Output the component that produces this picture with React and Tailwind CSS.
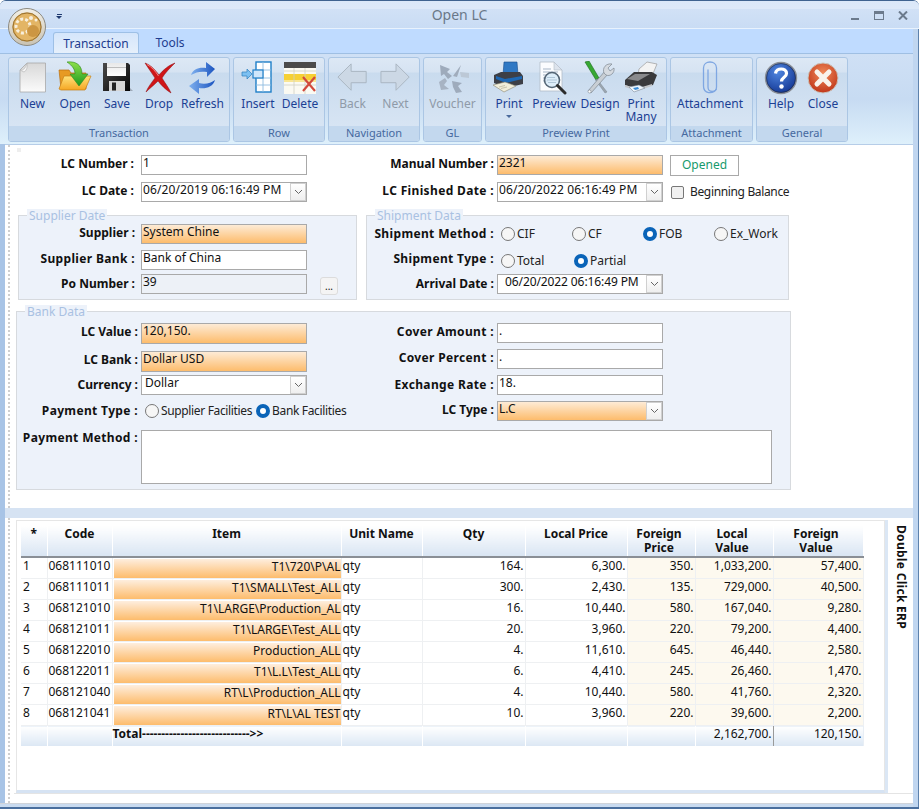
import React from "react";

const Ico = ({ children, w = 34, h = 34 }) => (
  <svg width={w} height={h} viewBox="0 0 34 34" className="block">{children}</svg>
);

const icons = {
  New: (
    <Ico>
      <defs>
        <linearGradient id="nw" x1="0" y1="0" x2="0" y2="1"><stop offset="0" stopColor="#d8d8d8" /><stop offset="1" stopColor="#fbfbfb" /></linearGradient>
      </defs>
      <path d="M4 9 L11 2 H29.500 V31 H4 Z" fill="url(#nw)" stroke="#a8a8a8" strokeWidth="0.8" />
      <path d="M4 9 Q9 10 11 2 Q12 9 8 11 Z" fill="#f5f5f5" stroke="#b0b0b0" strokeWidth="0.6" />
    </Ico>
  ),
  Open: (
    <Ico>
      <defs>
        <linearGradient id="of" x1="0" y1="0" x2="0" y2="1"><stop offset="0" stopColor="#ffe27a" /><stop offset="1" stopColor="#f5a623" /></linearGradient>
        <linearGradient id="oa" x1="0" y1="0" x2="0" y2="1"><stop offset="0" stopColor="#8fe04a" /><stop offset="1" stopColor="#1d9a20" /></linearGradient>
      </defs>
      <path d="M1 9 H11 L13 12 H28 V28 H3 Z" fill="#e79a23" stroke="#b96f10" strokeWidth="0.7" />
      <path d="M1 28 L6 15 H33 L27 29 H3 Z" fill="url(#of)" stroke="#c67f16" strokeWidth="0.7" />
      <path d="M9 1 C18 0 24 4 24 13 H30 L21 25 L12 13 H17 C17 9 15 5 9 1 Z" fill="url(#oa)" stroke="#2f8a22" strokeWidth="0.6" />
    </Ico>
  ),
  Save: (
    <Ico>
      <defs>
        <linearGradient id="sv" x1="0" y1="0" x2="1" y2="1"><stop offset="0" stopColor="#4a4a4a" /><stop offset="1" stopColor="#050505" /></linearGradient>
        <linearGradient id="sl" x1="0" y1="0" x2="0" y2="1"><stop offset="0" stopColor="#e8e8e8" /><stop offset="1" stopColor="#ffffff" /></linearGradient>
      </defs>
      <path d="M10 30 L33 30 L30 27 H10 Z" fill="#8a93a0" opacity="0.7" />
      <path d="M3 2 H28 L30 4 V30 H3 Z" fill="url(#sv)" />
      <rect x="7" y="2" width="19" height="13" fill="url(#sl)" />
      <rect x="7" y="6" width="19" height="1" fill="#bcbcbc" />
      <rect x="9" y="20" width="16" height="10" fill="#d6d6d6" />
      <rect x="12" y="21.500" width="4" height="8" fill="#222" />
    </Ico>
  ),
  Drop: (
    <Ico>
      <path d="M3 2 C9 4 14 10 17 14 C21 9 27 4 33 2 C28 7 23 12 20 17 C23 22 27 27 29 32 C24 29 19 24 16 20 C11 25 7 28 4 31 C6 26 10 21 13 17 C10 12 6 7 3 2 Z" fill="#cf1518" stroke="#8d0d10" strokeWidth="0.5" />
      <path d="M5 3.500 C10 6 14 11 16.500 15" stroke="#f6807f" strokeWidth="1" fill="none" />
    </Ico>
  ),
  Refresh: (
    <Ico>
      <defs>
        <linearGradient id="rf" x1="0" y1="0" x2="1" y2="0"><stop offset="0" stopColor="#7fb0ee" /><stop offset="1" stopColor="#1b54c0" /></linearGradient>
      </defs>
      <path d="M5 14 C7 8 13 6 20 7 L20 1 L29 8 L21 16 L21 11 C15 10 10 11 5 14 Z" fill="url(#rf)" />
      <path d="M29 19 C27 26 20 28 13 27 L13 33 L3 25 L13 18 L13 22 C19 24 25 22 29 19 Z" fill="url(#rf)" />
    </Ico>
  ),
  Insert: (
    <Ico>
      <rect x="15" y="1" width="15" height="30" fill="#fff" stroke="#1f7fc8" strokeWidth="1.4" />
      <path d="M15 9 H30 M15 17 H30 M15 24 H30 M22 1 V31" stroke="#8fbbe0" strokeWidth="0.9" />
      <rect x="12" y="9" width="10" height="8" fill="#cfe6fb" stroke="#1f7fc8" strokeWidth="1.2" />
      <path d="M1 11 H6 V8 L11 13 L6 18 V15 H1 Z" fill="#7cc0f2" stroke="#2f7fbd" strokeWidth="0.7" />
    </Ico>
  ),
  Delete: (
    <Ico>
      <rect x="1" y="1" width="32" height="32" fill="#fbfaf2" />
      <rect x="1" y="1" width="32" height="6" fill="#4b4b4b" />
      <rect x="1" y="13" width="32" height="6" fill="#f6d034" />
      <rect x="1" y="19" width="32" height="2" fill="#f9e693" />
      <path d="M1 10 H33 M1 24 H33 M11 7 V33 M22 7 V33" stroke="#d0cfc4" strokeWidth="0.8" />
      <path d="M20 16 L32 30 M32 16 L20 30" stroke="#d24a3c" strokeWidth="2.200" />
    </Ico>
  ),
  Back: (
    <Ico w={32} h={32}>
      <path d="M15 2 L1 16 L15 30 V22 H31 V10 H15 Z" fill="#ccd8e5" stroke="#a9b4c0" strokeWidth="1" />
    </Ico>
  ),
  Next: (
    <Ico w={32} h={32}>
      <path d="M17 2 L31 16 L17 30 V22 H1 V10 H17 Z" fill="#ccd8e5" stroke="#a9b4c0" strokeWidth="1" />
    </Ico>
  ),
  Voucher: (
    <Ico>
      <path d="M4 4 L14 8 L11 11 L16 15 L12 18 L8 13 L5 15 Z" fill="#9eabbc" />
      <path d="M3 21 L9 17 L11 20 L8 24 L13 28 L5 29 Z" fill="#a7b3c3" />
      <path d="M16 20 L26 22 L22 25 L26 31 L20 32 L17 26 Z" fill="#9eabbc" />
      <path d="M17 15 L25 4 L21 16 Z" fill="#a0acbc" />
      <path d="M24 11 L33 12 V17 L25 16 Z" fill="#bcc8d6" />
    </Ico>
  ),
  Print: (
    <Ico>
      <path d="M12 1 H25 L26 14 H11 Z" fill="#2f78c4" stroke="#174c8a" strokeWidth="0.6" />
      <path d="M2 14 L9 11 H28 L31 15 V23 L14 27 L2 22 Z" fill="#3d3f46" />
      <path d="M4 15 L13 18 L30 15 L30 18 L14 22 L4 18 Z" fill="#1e68b4" />
      <path d="M1 24 L13 21 L24 25 L12 31 Z" fill="#f1eeda" stroke="#8a8570" strokeWidth="0.6" />
      <path d="M7 26 L13 24.500 M9 27.500 L15 26" stroke="#b7b298" strokeWidth="0.7" />
    </Ico>
  ),
  Preview: (
    <Ico>
      <path d="M3 1 H17 L25 9 V30 H3 Z" fill="#fbfcfe" stroke="#b3bcc8" strokeWidth="0.8" />
      <path d="M17 1 V9 H25 Z" fill="#dde4ed" stroke="#b3bcc8" strokeWidth="0.6" />
      <path d="M6 8 H14 M6 11 H21 M6 14 H11 M6 17 H10 M6 20 H11" stroke="#a7b5c6" strokeWidth="1" />
      <circle cx="15" cy="19" r="7.500" fill="#d6e8f8" fillOpacity="0.8" stroke="#546575" strokeWidth="1.6" />
      <path d="M10 19 H20 M10 16.500 H18 M11 21.500 H19" stroke="#9cb4ca" strokeWidth="0.7" />
      <path d="M20.500 24.500 L28 32" stroke="#2c2c2c" strokeWidth="3" strokeLinecap="round" />
    </Ico>
  ),
  Design: (
    <Ico>
      <path d="M2 1 L6 0 L16 17 L13 19 Z" fill="#37a833" stroke="#1d6d1c" strokeWidth="0.6" />
      <path d="M14 18 L24 31 L22 32 L12.500 19 Z" fill="#9ba6b0" stroke="#6e7882" strokeWidth="0.4" />
      <path d="M5 30 L22 10 L25 13 L8 32 Z" fill="#c8ced4" stroke="#7d8791" strokeWidth="0.7" />
      <path d="M21 12 C19 7 23 2 29 3 L25 7 L27 10 L31 7 C32 12 27 16 23 14 Z" fill="#d5dae0" stroke="#7d8791" strokeWidth="0.7" />
      <circle cx="6.500" cy="30.500" r="1.500" fill="#fff" stroke="#7d8791" strokeWidth="0.6" />
    </Ico>
  ),
  "Print Many": (
    <Ico>
      <path d="M15 8 L23 1 L33 3 L28 15 L14 14 Z" fill="#f3f3f3" stroke="#9b9b9b" strokeWidth="0.7" />
      <path d="M1 19 L10 11 H28 L33 14 L29 24 L13 28 L1 24 Z" fill="#3a3a3c" />
      <path d="M3 18 L11 13 H26 L14 20 Z" fill="#8a8a8c" />
      <path d="M1 24 L13 27.500 L28 23 V25 L13 30 L1 26 Z" fill="#c4c6c9" />
      <path d="M5 26 L15 24 L21 27 L10 31 Z" fill="#eef5fb" stroke="#6e7a88" strokeWidth="0.5" />
      <path d="M9 27 L14 26 L15 28 L11 29 Z" fill="#3a8bd6" />
    </Ico>
  ),
  Attachment: (
    <Ico>
      <path d="M15 9 V26 C15 32 23.500 32 23.500 26 V7 C23.500 -1 10.500 -1 10.500 7 V25" fill="none" stroke="#7fa7e2" strokeWidth="1.300" strokeLinecap="round" />
      <path d="M10.500 25 C10.500 33 20 33.500 23.500 28" fill="none" stroke="#7fa7e2" strokeWidth="1.300" />
    </Ico>
  ),
  Help: (
    <Ico>
      <defs>
        <radialGradient id="hp" cx="0.400" cy="0.300" r="0.800"><stop offset="0" stopColor="#4f86e0" /><stop offset="1" stopColor="#0e2f8c" /></radialGradient>
      </defs>
      <circle cx="17" cy="17" r="15.500" fill="url(#hp)" stroke="#8b8f96" strokeWidth="1.400" />
      <circle cx="17" cy="17" r="14.500" fill="none" stroke="#222" strokeWidth="0.500" />
      <path d="M11.500 12.500 C12 6.500 22.500 6.500 22.500 12.500 C22.500 16.500 17.500 16 17.500 20.500" fill="none" stroke="#fff" strokeWidth="3.200" />
      <circle cx="17.500" cy="25.500" r="2.200" fill="#fff" />
    </Ico>
  ),
  Close: (
    <Ico>
      <defs>
        <radialGradient id="cl" cx="0.500" cy="0.350" r="0.750"><stop offset="0" stopColor="#f08a5a" /><stop offset="1" stopColor="#b92a10" /></radialGradient>
      </defs>
      <circle cx="17" cy="17" r="15" fill="url(#cl)" stroke="#c9c4bc" strokeWidth="1" />
      <path d="M11 11 L23 23 M23 11 L11 23" stroke="#f8f3ec" strokeWidth="5" strokeLinecap="round" />
    </Ico>
  ),
};

const RibbonBtn = ({ name, cls, off, label, arrow }) => (
  <div className={`flex flex-col items-center shrink-0 ${cls}`}>
    <div className="h-[36px] flex items-center justify-center mt-[2px]">{icons[name]}</div>
    <div className={`mt-[1px] text-center leading-[13px] whitespace-pre-line ${off ? "text-[#8f9aa8]" : "text-[#1c3f94]"}`}>{label || name}</div>
    {arrow && <div className="mt-[5px] w-0 h-0 border-x-[3px] border-x-transparent border-t-[3px] border-t-[#4a6a9c]" />}
  </div>
);

const Group = ({ w, caption, children, pl }) => (
  <div className={`${w} h-[85px] shrink-0 flex flex-col rounded-[3px] border border-[#abc6e4] overflow-hidden bg-[linear-gradient(#dde8f5_0%,#d6e3f2_17%,#c9dbee_18%,#dbe7f5_100%)]`}>
    <div className={`h-[68px] flex ${pl}`}>{children}</div>
    <div className="h-[15px] mt-auto bg-[#c3d8ee] text-center text-[11px] leading-[13px] text-[#46699f]">{caption}</div>
  </div>
);

const Label = ({ w, children, cls = "" }) => (
  <div className={`${w} shrink-0 flex justify-end font-bold text-[#111] whitespace-nowrap leading-[16px] ${cls}`}>{children}</div>
);

const Input = ({ value, w = "w-[166px]", h = "h-[20px]", orange, gray, pl = "pl-[1px]", dropdown, cls = "" }) => (
  <div className={`${w} ${h} shrink-0 flex border border-[#a9a9a9] ${pl} leading-[16px] text-[#111] whitespace-nowrap ${orange ? "bg-[linear-gradient(#fdebd6,#fdbc6c)]" : gray ? "bg-[#edf1f7]" : "bg-white"} ${cls}`}>
    <span className="flex-1 overflow-hidden">{value}</span>
    {dropdown && (
      <span className="w-[16px] shrink-0 border border-[#d0d0d0] bg-[linear-gradient(#ffffff,#efefef)] flex items-center justify-center">
        <svg width="9" height="6" viewBox="0 0 9 6"><path d="M1 1 L4.500 4.500 L8 1" fill="none" stroke="#666" strokeWidth="1" /></svg>
      </span>
    )}
  </div>
);

const Radio = ({ on, label, cls = "" }) => (
  <div className={`flex items-center text-[#222] whitespace-nowrap ${cls}`}>
    {on ? (
      <span className="w-[14px] h-[14px] shrink-0 rounded-full bg-white border-[4px] border-[#0a64b8]" />
    ) : (
      <span className="w-[14px] h-[14px] shrink-0 rounded-full bg-[#f6f6f6] border border-[#777]" />
    )}
    <span className="ml-[2px]">{label}</span>
  </div>
);

const Fieldset = ({ legend, cls, children, legendCls }) => (
  <div className={`relative border border-[#d7dade] bg-[#edf2fa] ${cls}`}>
    <div className={`absolute -top-[7px] px-[2px] h-[13px] leading-[13px] bg-[#edf2fa] text-[#a9c1e2] whitespace-nowrap ${legendCls}`}>{legend}</div>
    {children}
  </div>
);

const colW = ["w-[26px]", "w-[65px]", "w-[229px]", "w-[81px]", "w-[103px]", "w-[102px]", "w-[68px]", "w-[78px]", "w-[90px]"];
const heads = ["*", "Code", "Item", "Unit Name", "Qty", "Local Price", "Foreign\nPrice", "Local\nValue", "Foreign\nValue"];
const rows = [
  ["1", "068111010", "T1\\720\\P\\AL", "qty", "164.", "6,300.", "350.", "1,033,200.", "57,400."],
  ["2", "068111011", "T1\\SMALL\\Test_ALL", "qty", "300.", "2,430.", "135.", "729,000.", "40,500."],
  ["3", "068121010", "T1\\LARGE\\Production_AL", "qty", "16.", "10,440.", "580.", "167,040.", "9,280."],
  ["4", "068121011", "T1\\LARGE\\Test_ALL", "qty", "20.", "3,960.", "220.", "79,200.", "4,400."],
  ["5", "068122010", "Production_ALL", "qty", "4.", "11,610.", "645.", "46,440.", "2,580."],
  ["6", "068122011", "T1\\L.L\\Test_ALL", "qty", "6.", "4,410.", "245.", "26,460.", "1,470."],
  ["7", "068121040", "RT\\L\\Production_ALL", "qty", "4.", "10,440.", "580.", "41,760.", "2,320."],
  ["8", "068121041", "RT\\L\\AL TEST", "qty", "10.", "3,960.", "220.", "39,600.", "2,200."],
];

const Dotted = () => <div className="w-0 ml-[3px] mr-[4px] shrink-0 border-l-2 border-dotted border-[#cfcfcf]" />;
const wide = "tracking-[0.35px]";
const tight = "tracking-[-0.35px]";

export default function App() {
  return (
    <div className="w-[919px] h-[809px] overflow-hidden relative flex flex-col rounded-t-[6px] border-t border-[#3f6390] bg-[#c9dcf3] text-[12px] font-['Noto_Sans','Liberation_Sans',sans-serif] text-[#111]">
      {/* Title bar */}
      <div className="h-[28px] shrink-0 relative flex items-center justify-center border-b border-[#e8f2fd] bg-[linear-gradient(#dbe8f9_0%,#dde9f9_28%,#d1e1f6_30%,#c9dcf4_100%)]">
        <span className="text-[14px] text-[#6a7888]">Open LC</span>
        <div className="absolute left-[56px] top-[13px] w-[6px] flex flex-col items-center">
          <div className="w-[5px] h-[1px] bg-[#1f3a70]" />
          <div className="mt-[1px] w-0 h-0 border-x-[3px] border-x-transparent border-t-[3px] border-t-[#1f3a70]" />
        </div>
        <div className="absolute right-[11px] top-[10px] flex items-center gap-[14px]">
          <svg width="9" height="9" viewBox="0 0 9 9"><rect x="0" y="7" width="8" height="2" fill="#6b7a8c" /></svg>
          <svg width="10" height="9" viewBox="0 0 10 9"><rect x="0.500" y="0.500" width="9" height="8" fill="none" stroke="#6b7a8c" /><rect x="0" y="0" width="10" height="3" fill="#6b7a8c" /></svg>
          <svg width="10" height="9" viewBox="0 0 10 9"><path d="M1 0.500 L9 8.500 M9 0.500 L1 8.500" stroke="#6b7a8c" strokeWidth="2" /></svg>
        </div>
      </div>
      {/* App orb */}
      <div className="absolute left-[8px] top-[7px] w-[38px] h-[38px] rounded-full z-10 border border-[#8d8a80] bg-[linear-gradient(#f2efe6,#c9c3b4)] flex items-center justify-center">
        <svg width="30" height="30" viewBox="0 0 30 30">
          <circle cx="15" cy="15" r="14.500" fill="#b98a3a" />
          <circle cx="15" cy="15" r="14" fill="#e3b565" stroke="#8c6524" strokeWidth="0.8" />
          <circle cx="11" cy="14" r="7" fill="none" stroke="#f7efdd" strokeWidth="3" strokeDasharray="3 2" />
          <circle cx="21" cy="19" r="6" fill="#cc9642" />
          <circle cx="19" cy="6" r="2" fill="#f7efdd" />
          <circle cx="24" cy="8" r="1.500" fill="#f7efdd" />
        </svg>
      </div>
      {/* Tabs */}
      <div className="h-[24px] shrink-0 flex items-end bg-[#bfdbff] pl-[53px] text-[#1e3d8f]">
        <div className="w-[86px] h-[21px] rounded-t-[3px] border border-b-0 border-[#9ec0e6] bg-[linear-gradient(#d5e6fb,#e6f0fb)] text-center leading-[21px]">Transaction</div>
        <div className="w-[64px] h-[21px] ml-[-1px] text-center leading-[21px]">Tools</div>
      </div>
      {/* Ribbon */}
      <div className="h-[91px] shrink-0 flex gap-[3px] pl-[8px] pt-[3px] border-t border-[#9fbfe3] bg-[linear-gradient(#cfe0f5,#c7dbf2_50%,#def0fb_100%)]">
        <Group w="w-[222px]" caption="Transaction" pl="pl-[2px]">
          <RibbonBtn name="New" cls="w-[43px]" />
          <RibbonBtn name="Open" cls="w-[42px]" />
          <RibbonBtn name="Save" cls="w-[42px]" />
          <RibbonBtn name="Drop" cls="w-[42px]" />
          <RibbonBtn name="Refresh" cls="w-[45px]" />
        </Group>
        <Group w="w-[92px]" caption="Row" pl="pl-[3px]">
          <RibbonBtn name="Insert" cls="w-[42px]" />
          <RibbonBtn name="Delete" cls="w-[42px]" />
        </Group>
        <Group w="w-[92px]" caption="Navigation" pl="pl-[2px]">
          <RibbonBtn name="Back" off cls="w-[43px]" />
          <RibbonBtn name="Next" off cls="w-[43px]" />
        </Group>
        <Group w="w-[59px]" caption="GL" pl="pl-0">
          <RibbonBtn name="Voucher" off cls="w-[57px]" />
        </Group>
        <Group w="w-[182px]" caption="Preview Print" pl="pl-[2px]">
          <RibbonBtn name="Print" arrow cls="w-[42px]" />
          <RibbonBtn name="Preview" cls="w-[48px]" />
          <RibbonBtn name="Design" cls="w-[44px]" />
          <RibbonBtn name="Print Many" label={"Print\nMany"} cls="w-[38px]" />
        </Group>
        <Group w="w-[83px]" caption="Attachment" pl="pl-0">
          <RibbonBtn name="Attachment" cls="w-[78px]" />
        </Group>
        <Group w="w-[92px]" caption="General" pl="pl-[3px]">
          <RibbonBtn name="Help" cls="w-[42px]" />
          <RibbonBtn name="Close" cls="w-[42px]" />
        </Group>
      </div>

      {/* Body */}
      <div className="flex-1 min-h-0 flex flex-col mr-[5px] border-l-[5px] border-[#a8c4e6] bg-white">
        {/* Form */}
        <div className="h-[364px] shrink-0 flex border-t border-[#b6cde8]">
          <Dotted />
          <div className="relative flex-1 pt-[10px] [&_span.flex-1]:-mt-[1px]">
            <div className="absolute left-[3px] top-[3px] w-[4px] h-[4px] bg-[#eeeeee]" />
            <div className="flex items-center h-[20px]">
              <Label w="w-[120px]" cls="-mt-[2px]">LC Number :</Label>
              <Input value="1" cls="ml-[7px]" />
              <Label w="w-[187px]" cls="-mt-[2px]">Manual Number :</Label>
              <Input value="2321" orange cls="ml-[3px]" />
              <div className="ml-[7px] w-[69px] h-[21px] border border-[#a9a9a9] text-center leading-[18px] text-[#169a6c]">Opened</div>
            </div>
            <div className="flex items-center h-[20px] mt-[7px]">
              <Label w="w-[120px]" cls="-mt-[2px]">LC Date :</Label>
              <Input value="06/20/2019 06:16:49 PM" dropdown cls="ml-[7px] tracking-[0.12px]" />
              <Label w="w-[187px]" cls={`${wide} -mt-[2px]`}>LC Finished Date :</Label>
              <Input value="06/20/2022 06:16:49 PM" dropdown cls="ml-[3px] tracking-[0.12px]" />
              <div className="ml-[8px] w-[13px] h-[13px] rounded-[2px] border border-[#777] bg-[#f0f0f0]" />
              <span className={`ml-[6px] text-[#222] ${tight}`}>Beginning Balance</span>
            </div>
            <div className="flex mt-[13px]">
              <Fieldset legend="Supplier Date" cls="ml-[4px] w-[339px] h-[85px] pt-[8px]" legendCls="left-[8px]">
                <div className="flex items-center h-[20px]">
                  <Label w="w-[116px]" cls="-mt-[2px]">Supplier :</Label>
                  <Input value="System Chine" orange cls="ml-[6px]" />
                </div>
                <div className="flex items-center h-[20px] mt-[6px]">
                  <Label w="w-[116px]" cls={`${wide} -mt-[2px]`}>Supplier Bank :</Label>
                  <Input value="Bank of China" cls="ml-[6px]" />
                </div>
                <div className="flex items-center h-[20px] mt-[4px]">
                  <Label w="w-[116px]">Po Number :</Label>
                  <Input value="39" gray cls="ml-[6px]" />
                  <div className="ml-[13px] mt-[3px] w-[18px] h-[18px] rounded-[3px] border border-[#dcdcdc] bg-[#f4f4f4] text-center leading-[16px] text-[10px]">...</div>
                </div>
              </Fieldset>
              <Fieldset legend="Shipment Data" cls="ml-[9px] w-[423px] h-[85px] pt-[8px]" legendCls="left-[8px]">
                <div className="flex items-center h-[20px]">
                  <Label w="w-[127px]" cls={wide}>Shipment Method :</Label>
                  <Radio label="CIF" cls="ml-[7px] w-[71px]" />
                  <Radio label="CF" cls="w-[71px]" />
                  <Radio on label="FOB" cls="w-[71px]" />
                  <Radio label="Ex_Work" />
                </div>
                <div className="flex items-center h-[20px] mt-[6px]">
                  <Label w="w-[127px]" cls={`${wide} -mt-[2px]`}>Shipment Type :</Label>
                  <Radio label="Total" cls="ml-[7px] w-[73px] mt-[1px]" />
                  <Radio on label="Partial" cls="mt-[1px]" />
                </div>
                <div className="flex items-center h-[20px] mt-[4px]">
                  <Label w="w-[127px]">Arrival Date :</Label>
                  <Input value="06/20/2022 06:16:49 PM" pl="pl-[7px]" dropdown cls="ml-[3px] tracking-[-0.1px]" />
                </div>
              </Fieldset>
            </div>
            <Fieldset legend="Bank Data" cls="mt-[11px] ml-[2px] w-[775px] h-[179px] pt-[11px]" legendCls="left-[8px]">
              <div className="flex">
                <div className="w-[290px] shrink-0">
                  <div className="flex items-center h-[21px]">
                    <Label w="w-[121px]" cls="-mt-[4px]">LC Value :</Label>
                    <Input value="120,150." orange h="h-[21px]" cls="ml-[3px]" />
                  </div>
                  <div className="flex items-center h-[21px] mt-[7px]">
                    <Label w="w-[121px]" cls="-mt-[4px]">LC Bank :</Label>
                    <Input value="Dollar USD" orange h="h-[21px]" cls="ml-[3px]" />
                  </div>
                  <div className="flex items-center h-[20px] mt-[3px]">
                    <Label w="w-[121px]">Currency :</Label>
                    <Input value="Dollar" dropdown pl="pl-[3px]" cls="ml-[3px]" />
                  </div>
                  <div className="flex items-center h-[20px] mt-[6px]">
                    <Label w="w-[121px]" cls={wide}>Payment Type :</Label>
                    <Radio label="Supplier Facilities" cls={`ml-[7px] w-[118px] ${tight}`} />
                    <Radio on label="Bank Facilities" cls={`ml-[4px] ${tight}`} />
                  </div>
                </div>
                <div>
                  <div className="flex items-center h-[20px]">
                    <Label w="w-[187px]" cls={`${wide} -mt-[3px]`}>Cover Amount :</Label>
                    <Input value="." cls="ml-[3px]" />
                  </div>
                  <div className="flex items-center h-[20px] mt-[6px]">
                    <Label w="w-[187px]" cls={`${wide} -mt-[2px]`}>Cover Percent :</Label>
                    <Input value="." cls="ml-[3px]" />
                  </div>
                  <div className="flex items-center h-[20px] mt-[6px]">
                    <Label w="w-[187px]" cls={wide}>Exchange Rate :</Label>
                    <Input value="18." cls="ml-[3px]" />
                  </div>
                  <div className="flex items-center h-[20px] mt-[6px]">
                    <Label w="w-[187px]" cls="-mt-[2px]">LC Type :</Label>
                    <Input value="L.C" orange dropdown cls="ml-[3px]" />
                  </div>
                </div>
              </div>
              <div className="flex mt-[9px]">
                <Label w="w-[121px]" cls={wide}>Payment Method :</Label>
                <Input value="" w="w-[631px]" h="h-[54px]" cls="ml-[3px]" />
              </div>
            </Fieldset>
          </div>
        </div>
        {/* Splitter */}
        <div className="h-[10px] shrink-0 bg-[#d6e3f3]" />
        {/* Lower */}
        <div className="flex-1 min-h-0 flex">
          <Dotted />
          <div className="flex-1 min-w-0 flex flex-col">
            <div className="flex-1 min-h-0 flex pt-[2px]">
              <div className="w-[869px] ml-[2px] shrink-0 border border-[#e6e6e6] border-b-[3px] border-b-[#d6e3f3] pl-[4px] pt-[5px]">
                <table className="table-fixed border-collapse w-[842px]">
                  <colgroup>
                    {colW.map((c, i) => <col key={i} className={c} />)}
                  </colgroup>
                  <thead>
                    <tr className="h-[31px]">
                      {heads.map((h, i) => (
                        <th key={i} className={`p-0 align-top border-r border-white border-b-2 border-b-[#8a8f96] bg-[linear-gradient(#ffffff,#d9e5f3)] font-bold text-[#111] text-center leading-[14px] whitespace-pre-line pt-[1px] ${i === 0 ? "text-[#1e3d8f]" : ""} ${i >= 6 ? "pr-[4px]" : ""}`}>{h}</th>
                      ))}
                    </tr>
                  </thead>
                  <tbody>
                    {rows.map((r, ri) => (
                      <tr key={ri} className="h-[21px]">
                        {r.map((v, i) => (
                          <td key={i} className={`p-0 border-r border-b border-[#eef0f2] leading-[16px] whitespace-nowrap overflow-hidden align-top ${i >= 6 ? "bg-[#fdf9ef]" : ""} ${i === 2 || i >= 4 ? "text-right" : "text-left"} ${i === 0 ? "pl-[2px]" : i === 1 || i === 3 ? "pl-[1px]" : ""} ${i >= 4 ? "pr-[1px]" : ""}`}>
                            {i === 2 ? (
                              <div className="h-[19px] mt-[1px] ml-[1px] bg-[linear-gradient(#feeede,#fdbc6c)]">{v}</div>
                            ) : v}
                          </td>
                        ))}
                      </tr>
                    ))}
                    <tr className="h-[20px]">
                      {["", "", "Total---------------------------->>", "", "", "", "", "2,162,700.", "120,150."].map((v, i) => (
                        <td key={i} className={`p-0 border-r leading-[15px] align-top whitespace-nowrap bg-[linear-gradient(#ffffff,#dbe7f4)] ${i === 2 ? "font-bold text-left" : "text-right pr-[1px]"} ${i === 7 ? "border-l border-l-[#9a9a9a] border-r-[#9a9a9a]" : i === 8 ? "border-r-[#e8eef5]" : "border-r-white"}`}>{v}</td>
                      ))}
                    </tr>
                  </tbody>
                </table>
              </div>
              <div className="w-[3px] shrink-0 bg-[#dbe7f5]" />
              <div className="flex-1 pt-[5px] pl-[5px]">
                <div className="[writing-mode:vertical-rl] font-bold text-[#111] tracking-[0.3px] leading-[16px] whitespace-nowrap">Double Click ERP</div>
              </div>
            </div>
            <div className="h-[10px] shrink-0 border-t border-[#e4e4e4]" />
          </div>
        </div>
      </div>
      <div className="h-[6px] shrink-0 bg-[#c9dbf0] border-t border-[#d0d4da]" />
      <div className="absolute right-0 top-[28px] bottom-0 w-[6px] bg-[#c0d6f0] border-r border-[#5d82ad]" />
      <div className="absolute left-0 right-0 bottom-0 h-[2px] bg-[#4a6f9e]" />
    </div>
  );
}
